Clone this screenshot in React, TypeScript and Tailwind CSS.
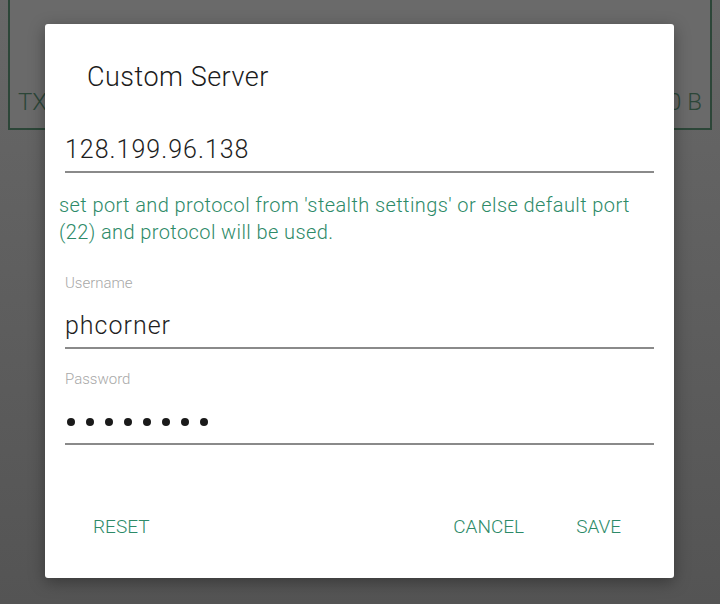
import React from 'react';

const font = { fontFamily: 'Roboto, "Liberation Sans", sans-serif' };

function Field({ label, value, dots }: { label?: string; value?: string; dots?: boolean }) {
  return (
    <div className="flex flex-col">
      {label && (
        <div className="h-[20px] text-[15px] font-light leading-[20px] text-[#a8a8a8]">{label}</div>
      )}
      <div className={label ? 'mt-[14px] flex h-[38px] items-center' : 'flex h-[38px] items-center'}>
        {dots ? (
          <div className="flex items-center gap-[11px] pl-[2px]">
            {Array.from({ length: 8 }).map((_, i) => (
              <span key={i} className="h-[8px] w-[8px] rounded-full bg-[#1a1a1a]" />
            ))}
          </div>
        ) : (
          <span className="text-[25px] font-light tracking-[1px] text-[#1e1e1e]">{value}</span>
        )}
      </div>
      <div className="mt-[2px] h-[2px] w-full bg-[#8a8a8a]" />
    </div>
  );
}

export default function App() {
  return (
    <div className="relative h-[604px] w-[720px] overflow-hidden bg-gradient-to-b from-[#686868] to-[#545454]" style={font}>
      {/* background card behind the dialog */}
      <div className="mx-[8px] flex h-[130px] items-end justify-between border-2 border-t-0 border-[#2c4638] bg-[#6a6a6a] px-[8px] pb-[8px] text-[24px] font-light text-[#2c4638]">
        <span>TX</span>
        <span>0 B</span>
      </div>

      <div className="absolute left-[45px] top-[24px] flex h-[554px] w-[629px] flex-col rounded-[3px] bg-white shadow-[0_4px_16px_rgba(0,0,0,0.35)]">
        <div className="pl-[42px] pt-[37px] text-[27px] font-light leading-[32px] tracking-[0.5px] text-[#1c1c1c]">
          Custom Server
        </div>

        <div className="mt-[38px] px-[20px]">
          <Field value="128.199.96.138" />
        </div>

        <p className="mt-[19px] px-[14px] text-[20px] font-light leading-[27px] tracking-[0.4px] text-[#2d8a68]">
          set port and protocol from 'stealth settings' or else default port (22) and protocol will be used.
        </p>

        <div className="mt-[27px] px-[20px]">
          <Field label="Username" value="phcorner" />
        </div>

        <div className="mt-[20px] px-[20px]">
          <Field label="Password" dots />
        </div>

        <div className="mt-auto mb-[37px] flex items-center px-[48px] text-[19px] font-light text-[#2d8a68]">
          <span>RESET</span>
          <span className="ml-auto">CANCEL</span>
          <span className="ml-[52px] mr-[5px]">SAVE</span>
        </div>
      </div>
    </div>
  );
}
